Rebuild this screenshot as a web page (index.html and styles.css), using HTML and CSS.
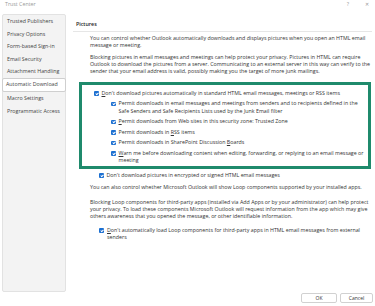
FILE: index.html
```html
<!DOCTYPE html>
<html>

<head>
    <title>Trust Center</title>
    <meta charset="utf-8">
    <link rel="stylesheet" href="styles.css">
</head>

<body>
    <div class="titlebar">
        <span class="title">Trust Center</span>
        <span class="help">?</span>
        <span class="close">&#x2715;</span>
    </div>

    <div class="main">
        <ul class="nav">
            <li>Trusted Publishers</li>
            <li>Privacy Options</li>
            <li>Form-based Sign-in</li>
            <li>Email Security</li>
            <li>Attachment Handling</li>
            <li class="active">Automatic Download</li>
            <li>Macro Settings</li>
            <li>Programmatic Access</li>
        </ul>

        <div class="content">
            <div class="section-title">Pictures</div>
            <p class="first">You can control whether Outlook automatically downloads and displays pictures when you open an HTML email message or meeting.</p>
            <p class="gap">Blocking pictures in email messages and meetings can help protect your privacy. Pictures in HTML can require Outlook to download the pictures from a server. Communicating to an external server in this way can verify to the sender that your email address is valid, possibly making you the target of more junk mailings.</p>

            <div class="highlight">
                <div class="option"><span class="check"></span><span class="key">Don't download pictures automatically in standard HTML email messages, meetings or RSS items</span></div>
                <div class="sub">
                    <div class="option"><span class="check"></span><span>Permit downloads in email messages and meetings from senders and to recipients defined in the Safe Senders and Safe Recipients Lists used by the Junk Email filter</span></div>
                    <div class="option"><span class="check"></span><span class="key">Permit downloads from Web sites in this security zone: Trusted Zone</span></div>
                    <div class="option"><span class="check"></span><span>Permit downloads in <u>R</u>SS items</span></div>
                    <div class="option"><span class="check"></span><span>Permit downloads in SharePoint Discussion <u>B</u>oards</span></div>
                    <div class="option"><span class="check"></span><span class="key">Warn me before downloading content when editing, forwarding, or replying to an email message or meeting</span></div>
                </div>
            </div>

            <div class="option outside"><span class="check"></span><span>Don't download pictures in encrypted or signed HTML email messages</span></div>

            <p class="also">You can also control whether Microsoft Outlook will show Loop components supported by your installed apps.</p>
            <p class="loop">Blocking Loop components for third-party apps (installed via Add Apps or by your administrator) can help protect your privacy. To load these components Microsoft Outlook will request information from the app which may give others awareness that you opened the message, or other identifiable information.</p>

            <div class="option outside loop-option"><span class="check"></span><span class="key">Don't automatically load Loop components for third-party apps in HTML email messages from external senders</span></div>
        </div>
    </div>

    <div class="footer">
        <button class="btn ok">OK</button>
        <button class="btn cancel">Cancel</button>
    </div>
</body>

</html>
```

FILE: styles.css
```css
body {
    margin: 0;
    font-family: "Open Sans", "Noto Sans", sans-serif;
    font-size: 5.3px;
    color: #333;
    background: #fff;
}

.titlebar {
    height: 14px;
    box-sizing: border-box;
    display: flex;
    align-items: flex-start;
    padding: 1px 6px 0 5px;
    line-height: 7px;
    color: #999;
}

.help {
    margin-left: auto;
}

.close {
    margin-left: 16px;
    font-size: 5px;
}

.main {
    display: flex;
    height: 278px;
}

.nav {
    width: 64px;
    box-sizing: border-box;
    margin: 0 0 0 2px;
    padding: 0;
    list-style: none;
    background: #f3f3f3;
    border: 1px solid #e2e2e2;
    border-radius: 2px;
}

.nav li {
    height: 12.5px;
    line-height: 12.5px;
    padding-left: 4px;
    color: #444;
    white-space: nowrap;
}

.nav li.active {
    background: #fff;
    border: 1px solid #cfcfcf;
    border-radius: 2px;
    line-height: 10.5px;
    padding-left: 3px;
    margin: 0 -1px;
}

.content {
    flex: 1;
    margin-left: 7px;
    padding: 6px 3px 0 0;
}

.section-title {
    padding: 0 0 3px 3px;
    line-height: 8px;
    font-weight: 600;
    color: #222;
    border-bottom: 1px solid #e6e6e6;
}

.content p {
    margin: 0 0 0 17px;
    line-height: 7px;
}

.content p.first {
    margin-top: 2.5px;
}

.content p.gap {
    margin-top: 5px;
}

.highlight {
    margin: 7.5px 1px 0 6px;
    border: 3px solid #1f8a6c;
    padding: 4.5px 0 1px 12px;
}

.option {
    display: flex;
    align-items: flex-start;
    gap: 3px;
    line-height: 7.5px;
}

.option + .option,
.sub {
    margin-top: 3px;
}

.sub {
    padding-left: 17px;
}

/* access key: first letter underlined */
.key::first-letter {
    text-decoration: underline;
}

.check {
    flex: none;
    width: 4.5px;
    height: 4.5px;
    margin-top: 1.5px;
    background: #1b6fd1;
    border-radius: 1px;
    position: relative;
}

.check::after {
    content: "";
    position: absolute;
    left: 1.5px;
    top: 0.5px;
    width: 1.1px;
    height: 2.2px;
    border-right: 0.8px solid #fff;
    border-bottom: 0.8px solid #fff;
    transform: rotate(45deg);
}

.outside {
    margin: 3.25px 0 0 26px;
}

.content p.also {
    margin-top: 4.75px;
}

.content p.loop {
    margin-top: 8px;
}

.loop-option {
    margin-top: 6.75px;
    gap: 3.5px;
}

.footer {
    display: flex;
    justify-content: flex-end;
    gap: 3px;
    padding: 1px 2px 0 0;
}

.btn {
    height: 10px;
    padding: 0;
    font-family: inherit;
    font-size: 5px;
    color: #333;
    background: #fff;
    border: 1px solid #d1d1d1;
    border-radius: 2px;
}

.ok {
    width: 36px;
}

.cancel {
    width: 33px;
}
```
